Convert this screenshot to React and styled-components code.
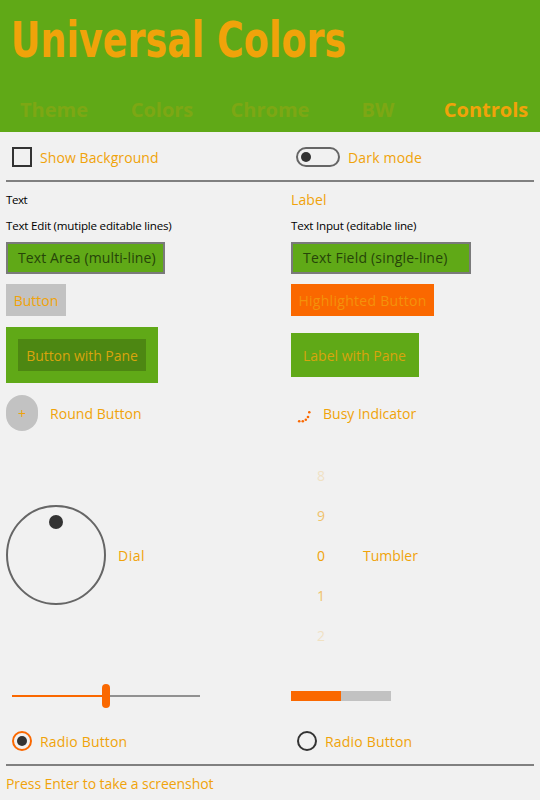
import React from 'react';
import styled, { createGlobalStyle } from 'styled-components';

const amber = '#f0a30a';
const green = '#60a917';
const orange = '#fa6800';
const gray = '#c2c2c2';
const dark = '#333333';

const GlobalStyle = createGlobalStyle`
  * { box-sizing: border-box; }
  body { margin: 0; background: #f1f1f1; }
`;

const Window = styled.div`
  width: 540px;
  height: 800px;
  overflow: hidden;
  display: flex;
  flex-direction: column;
  background: #f1f1f1;
  color: ${amber};
  font: 14px/20px 'Open Sans', 'Noto Sans', sans-serif;
  white-space: nowrap;
`;

const Header = styled.header`
  height: 132px;
  flex: none;
  display: flex;
  flex-direction: column;
  justify-content: space-between;
  background: ${green};
`;

const Title = styled.h1`
  margin: 0;
  padding: 12px 0 0 13px;
  width: max-content;
  font: bold 49px/58px 'DejaVu Sans Condensed', 'DejaVu Sans', sans-serif;
  font-stretch: condensed;
  transform: scaleX(0.828);
  transform-origin: 0 0;
`;

const TabBar = styled.nav`
  display: grid;
  grid-template-columns: repeat(5, 108px);
  height: 44px;
`;

const Tab = styled.span`
  text-align: center;
  font-size: 20px;
  font-weight: bold;
  line-height: 44px;
  opacity: ${(p) => (p.$active ? 1 : 0.2)};
`;

const Row = styled.div`
  flex: none;
  height: ${(p) => p.$h}px;
  padding: ${(p) => p.$top || 0}px 6px 0;
  display: grid;
  grid-template-columns: 285px 1fr;
  align-items: center;
`;

const Cell = styled.div`
  display: flex;
  align-items: center;
  gap: ${(p) => p.$gap || 0}px;
  padding-left: ${(p) => p.$inset || 0}px;
`;

const Divider = styled.div`
  flex: none;
  height: 2px;
  margin: 0 6px;
  background: #808080;
`;

const Label = styled.span`
  letter-spacing: ${(p) => p.$track || 0}px;
  padding-top: ${(p) => p.$drop || 0}px;
`;

const PlainText = styled.span`
  color: #000;
  font-size: 11.6px;
  line-height: 16px;
  letter-spacing: ${(p) => p.$track || -0.21}px;
`;

const Field = styled.div`
  width: ${(p) => p.$w}px;
  height: 32px;
  padding-left: 10px;
  border: 2px solid #7a7a7a;
  background: ${green};
  color: #264409;
  line-height: 28px;
  letter-spacing: ${(p) => p.$track}px;
`;

const Button = styled.div`
  width: ${(p) => p.$w}px;
  height: 32px;
  line-height: 33px;
  text-align: center;
  background: ${(p) => p.$bg || gray};
  letter-spacing: ${(p) => p.$track || 0}px;
  color: ${(p) => p.$ink || amber};
`;

const Pane = styled.div`
  padding: 12px;
  background: ${green};
`;

const PaneLabel = styled.div`
  width: 104px;
  height: 20px;
  line-height: 21px;
  color: #d8a40d;
`;

const RoundButton = styled.div`
  width: 32px;
  height: 36px;
  border-radius: 16px;
  background: ${gray};
  text-align: center;
  line-height: 37px;
`;

const CheckBox = styled.div`
  width: 20px;
  height: 20px;
  border: 2px solid ${dark};
`;

const Switch = styled.div`
  width: 44px;
  height: 20px;
  border: 2px solid #666;
  border-radius: 10px;
  display: flex;
  align-items: center;
  padding-left: 3px;
`;

const Knob = styled.div`
  width: 10px;
  height: 10px;
  border-radius: 50%;
  background: ${dark};
`;

const Radio = styled.div`
  width: 20px;
  height: 20px;
  border: 2px solid ${(p) => (p.$checked ? orange : dark)};
  border-radius: 50%;
  display: flex;
  align-items: center;
  justify-content: center;
`;

const Dial = styled.div`
  width: 100px;
  height: 100px;
  border: 2px solid #666;
  border-radius: 50%;
  display: flex;
  justify-content: center;
  padding-top: 8px;
`;

const DialHandle = styled.div`
  width: 14px;
  height: 14px;
  border-radius: 50%;
  background: ${dark};
`;

const Tumbler = styled.div`
  width: 60px;
  display: grid;
  grid-auto-rows: 40px;
  text-align: center;
  line-height: 41px;
`;

const Digit = styled.span`
  opacity: ${(p) => p.$fade};
`;

const Slider = styled.div`
  width: 188px;
  height: 24px;
  display: flex;
  align-items: center;
`;

const Track = styled.div`
  flex: 1;
  height: 2px;
  background: ${(p) => p.$bg};
`;

const Handle = styled.div`
  width: 8px;
  height: 24px;
  border-radius: 4px;
  background: ${orange};
`;

const Progress = styled.div`
  width: 100px;
  height: 10px;
  background: ${gray};
`;

const ProgressFill = styled.div`
  width: 50%;
  height: 100%;
  background: ${orange};
`;

const Footer = styled.footer`
  flex: 1;
  padding: 8px 6px 0;
  letter-spacing: -0.07px;
`;

const BusyIndicator = () => (
  <svg width="20" height="36" viewBox="0 0 20 36" fill={orange}>
    <circle cx="18.3" cy="17.3" r="1.3" />
    <circle cx="17" cy="22" r="1.3" />
    <circle cx="14.8" cy="24.8" r="1.3" />
    <circle cx="11.8" cy="26.3" r="1.3" />
    <circle cx="8.2" cy="26.2" r="1.3" />
  </svg>
);

const tabs = ['Theme', 'Colors', 'Chrome', 'BW', 'Controls'];
const digits = [[8, 0.2], [9, 0.6], [0, 1], [1, 0.6], [2, 0.2]];

export default function App() {
  return (
    <Window>
      <GlobalStyle />
      <Header>
        <Title>Universal Colors</Title>
        <TabBar>
          {tabs.map((t) => <Tab key={t} $active={t === 'Controls'}>{t}</Tab>)}
        </TabBar>
      </Header>
      <Row $h={48} $top={2}>
        <Cell $inset={6} $gap={8}><CheckBox /><Label $track={0.07} $drop={1}>Show Background</Label></Cell>
        <Cell $inset={5} $gap={8}><Switch><Knob /></Switch><Label $track={0.17} $drop={1}>Dark mode</Label></Cell>
      </Row>
      <Divider />
      <Row $h={36}>
        <PlainText $track={-0.5}>Text</PlainText>
        <Label $track={0.1}>Label</Label>
      </Row>
      <Row $h={16}>
        <PlainText>Text Edit (mutiple editable lines)</PlainText>
        <PlainText>Text Input (editable line)</PlainText>
      </Row>
      <Row $h={48}>
        <Field $w={159} $track={0.11}>Text Area (multi-line)</Field>
        <Field $w={180} $track={0.19}>Text Field (single-line)</Field>
      </Row>
      <Row $h={36}>
        <Button $w={60}>Button</Button>
        <Button $w={143} $bg={orange} $ink="#f4920a" $track={0.29}>Highlighted Button</Button>
      </Row>
      <Row $h={74}>
        <Cell><Pane><Button $w={128} $bg="#4d8712" $ink="#d8a40d" $track={-0.06}>Button with Pane</Button></Pane></Cell>
        <Cell><Pane><PaneLabel>Label with Pane</PaneLabel></Pane></Cell>
      </Row>
      <Row $h={42}>
        <Cell $gap={12}><RoundButton>+</RoundButton><Label $track={0.05} $drop={1}>Round Button</Label></Cell>
        <Cell $gap={12}><BusyIndicator /><Label $drop={1}>Busy Indicator</Label></Cell>
      </Row>
      <Row $h={242}>
        <Cell $gap={12}><Dial><DialHandle /></Dial><Label $track={0.5} $drop={1}>Dial</Label></Cell>
        <Cell $gap={12}>
          <Tumbler>{digits.map(([n, fade]) => <Digit key={n} $fade={fade}>{n}</Digit>)}</Tumbler>
          <Label $drop={1}>Tumbler</Label>
        </Cell>
      </Row>
      <Row $h={40}>
        <Cell $inset={6}><Slider><Track $bg={orange} /><Handle /><Track $bg="#919191" /></Slider></Cell>
        <Progress><ProgressFill /></Progress>
      </Row>
      <Row $h={48} $top={2}>
        <Cell $inset={6} $gap={8}><Radio $checked><Knob /></Radio><Label $track={0.18} $drop={1}>Radio Button</Label></Cell>
        <Cell $inset={6} $gap={8}><Radio /><Label $track={0.18} $drop={1}>Radio Button</Label></Cell>
      </Row>
      <Divider />
      <Footer>Press Enter to take a screenshot</Footer>
    </Window>
  );
}
